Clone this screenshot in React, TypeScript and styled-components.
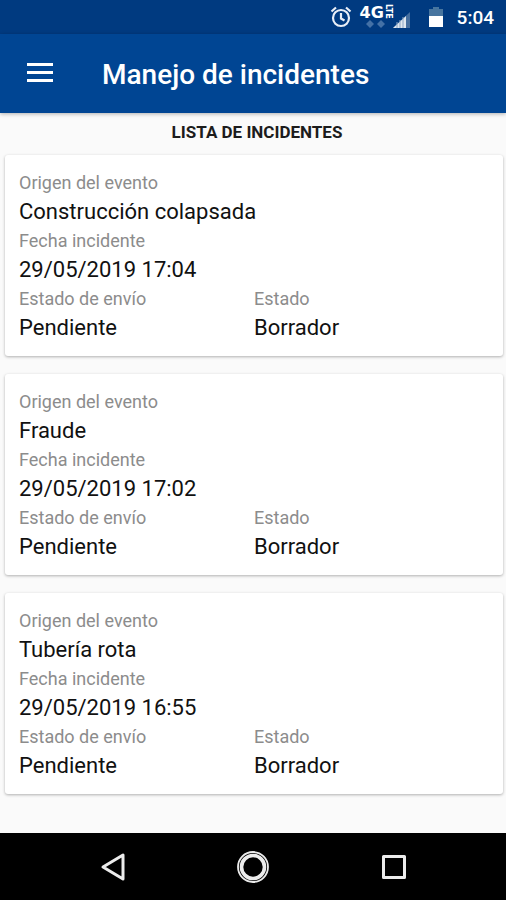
import React from "react";
import styled, { createGlobalStyle } from "styled-components";

const GlobalStyle = createGlobalStyle`
  * { box-sizing: border-box; }
  body { margin: 0; background: #fafafa; font-family: Roboto, "Liberation Sans", sans-serif; }
`;

const Screen = styled.div`
  min-height: 100vh;
  display: flex;
  flex-direction: column;
`;

const StatusBar = styled.div`
  height: 34px;
  padding: 0 12px 0 0;
  background: #003a80;
  color: #fff;
  display: flex;
  align-items: center;
  justify-content: flex-end;
`;

const AlarmIcon = styled.svg`
  width: 22px;
  height: 22px;
  margin-right: 8px;
`;

const Network = styled.div`
  position: relative;
  width: 51px;
  height: 34px;
`;

const NetworkIcon = styled.svg`
  position: absolute;
  inset: 0;
  width: 51px;
  height: 34px;
`;

const NetworkType = styled.span`
  position: absolute;
  left: 0;
  top: 5px;
  font-family: "DejaVu Sans", sans-serif;
  font-size: 16px;
  line-height: 16px;
  font-weight: 700;
`;

const NetworkSuffix = styled.span`
  position: absolute;
  left: 24px;
  top: 4px;
  font-family: "DejaVu Sans", sans-serif;
  font-size: 8px;
  line-height: 8px;
  font-weight: 700;
  writing-mode: vertical-rl;
`;

const BatteryIcon = styled.svg`
  width: 14px;
  height: 20px;
  margin: 0 14px 0 18px;
`;

const Clock = styled.time`
  padding-top: 2px;
  font-size: 19px;
  line-height: 24px;
  font-weight: 500;
`;

const AppBar = styled.header`
  height: 79px;
  padding: 3px 24px 0;
  background: #004593;
  color: #fff;
  display: flex;
  align-items: center;
  gap: 46px;
  box-shadow: 0 1px 4px rgba(0, 0, 0, 0.3);
`;

const MenuButton = styled.button`
  width: 32px;
  height: 32px;
  padding: 0;
  border: 0;
  background: none;
  color: inherit;
`;

const Title = styled.h1`
  margin: 0;
  font-size: 28px;
  line-height: 32px;
  font-weight: 500;
`;

const Content = styled.main`
  flex: 1;
  padding: 8px 3px 24px 5px;
`;

const ListHeading = styled.h2`
  margin: 0 0 12px;
  padding-left: 6px;
  font-size: 17px;
  line-height: 22px;
  font-weight: 700;
  text-align: center;
  color: #1c1c1c;
`;

const IncidentList = styled.div`
  display: grid;
  gap: 18px;
`;

const Card = styled.article`
  padding: 15px 14px 12px;
  border-radius: 3px;
  background: #fff;
  box-shadow: 0 1px 3px rgba(0, 0, 0, 0.3);
`;

const Fields = styled.dl`
  margin: 0;
  display: grid;
  grid-template-columns: 1fr 1fr;
`;

const Field = styled.div<{ $wide?: boolean }>`
  grid-column: ${({ $wide }) => ($wide ? "1 / -1" : "auto")};
`;

const Label = styled.dt`
  font-size: 18px;
  line-height: 26px;
  color: #8c8c8c;
`;

const Value = styled.dd`
  margin: 0;
  font-size: 22px;
  line-height: 32px;
  color: #111;
`;

const NavBar = styled.nav`
  height: 67px;
  padding: 0 43px;
  background: #000;
  display: grid;
  grid-template-columns: repeat(3, 1fr);
  align-items: center;
  justify-items: center;
`;

const NavButton = styled.button`
  width: 48px;
  height: 48px;
  padding: 8px;
  border: 0;
  background: none;
  color: #ececec;
`;

const incidents = [
  { origin: "Construcción colapsada", date: "29/05/2019 17:04" },
  { origin: "Fraude", date: "29/05/2019 17:02" },
  { origin: "Tubería rota", date: "29/05/2019 16:55" },
];

export default function App() {
  return (
    <Screen>
      <GlobalStyle />
      <StatusBar>
        <AlarmIcon viewBox="0 0 22 22" fill="none" stroke="#e8eef6" strokeWidth="2.200" aria-hidden="true">
          <circle cx="11" cy="12" r="8" />
          <path d="M11 7v5.500l3.500 2M1.500 5.500l4.500-4M20.500 5.500l-4.500-4" />
        </AlarmIcon>
        <Network>
          <NetworkIcon viewBox="0 0 51 34" aria-hidden="true">
            <path d="M50 12v16H33z" fill="#466f9f" />
            <path d="M46 16v12H33z" fill="#dfe7ef" />
            <path d="M37 22v6M40 20v8M43 17v11" stroke="#8ba5c4" />
            <path d="M6 24l4-4 4 4-4 4zM17 24l4-4 4 4-4 4z" fill="#4471a6" />
          </NetworkIcon>
          <NetworkType>4G</NetworkType>
          <NetworkSuffix>LTE</NetworkSuffix>
        </Network>
        <BatteryIcon viewBox="0 0 14 20" aria-hidden="true">
          <path d="M0 2h4V0h6v2h4v7H0z" fill="#47759f" />
          <path d="M0 9h14v11H0z" fill="#fff" />
        </BatteryIcon>
        <Clock>5:04</Clock>
      </StatusBar>
      <AppBar>
        <MenuButton type="button" aria-label="Abrir menú">
          <svg width="32" height="32" viewBox="0 0 32 32" fill="#fff" aria-hidden="true">
            <path d="M3 4h26v3H3zM3 12h26v3H3zM3 20h26v3H3z" />
          </svg>
        </MenuButton>
        <Title>Manejo de incidentes</Title>
      </AppBar>
      <Content>
        <ListHeading>LISTA DE INCIDENTES</ListHeading>
        <IncidentList>
          {incidents.map((incident) => (
            <Card key={incident.date}>
              <Fields>
                <Field $wide>
                  <Label>Origen del evento</Label>
                  <Value>{incident.origin}</Value>
                </Field>
                <Field $wide>
                  <Label>Fecha incidente</Label>
                  <Value>{incident.date}</Value>
                </Field>
                <Field>
                  <Label>Estado de envío</Label>
                  <Value>Pendiente</Value>
                </Field>
                <Field>
                  <Label>Estado</Label>
                  <Value>Borrador</Value>
                </Field>
              </Fields>
            </Card>
          ))}
        </IncidentList>
      </Content>
      <NavBar>
        <NavButton type="button" aria-label="Atrás">
          <svg width="32" height="32" viewBox="0 0 32 32" fill="none" stroke="currentColor" strokeWidth="3" strokeLinejoin="round" aria-hidden="true">
            <path d="M26 4v24L6 16z" />
          </svg>
        </NavButton>
        <NavButton type="button" aria-label="Inicio">
          <svg width="32" height="32" viewBox="0 0 32 32" fill="none" stroke="currentColor" aria-hidden="true">
            <circle cx="16" cy="16" r="15" strokeWidth="1.800" />
            <circle cx="16" cy="16" r="11.500" strokeWidth="3.600" />
          </svg>
        </NavButton>
        <NavButton type="button" aria-label="Recientes">
          <svg width="32" height="32" viewBox="0 0 32 32" fill="none" stroke="currentColor" strokeWidth="3" strokeLinejoin="round" aria-hidden="true">
            <path d="M6.500 5.500h21v21h-21z" />
          </svg>
        </NavButton>
      </NavBar>
    </Screen>
  );
}
